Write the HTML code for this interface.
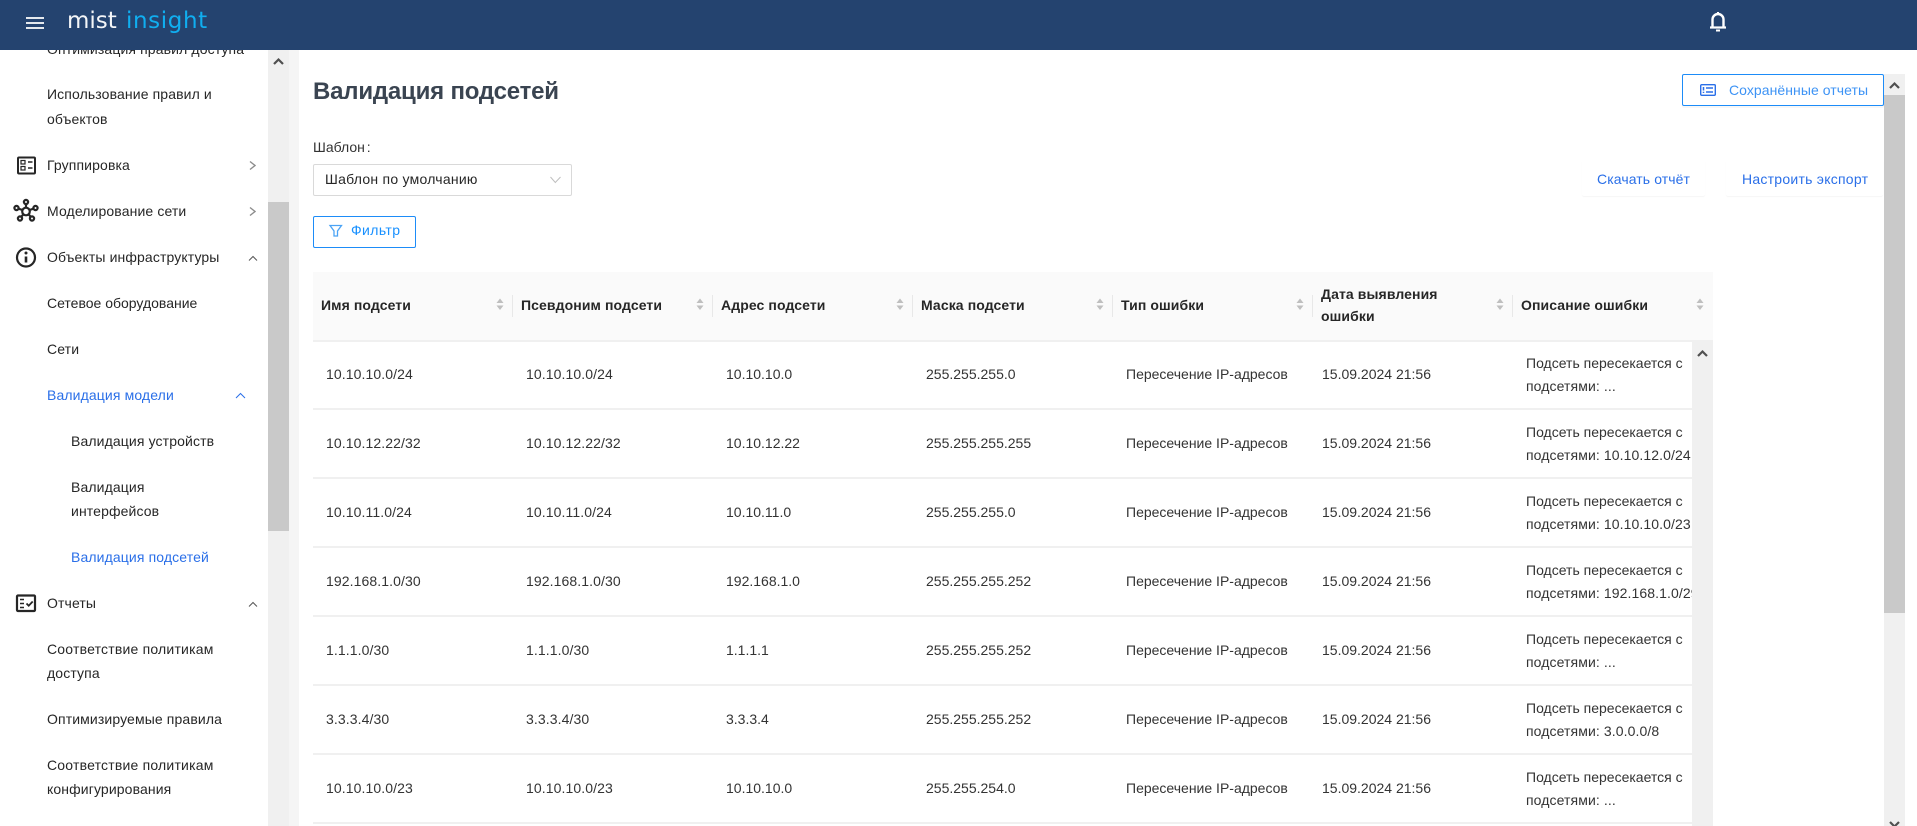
<!DOCTYPE html>
<html lang="ru"><head><meta charset="utf-8"><title>Валидация подсетей</title>
<style>
html,body{margin:0;padding:0;width:1917px;height:826px;overflow:hidden;background:#fff}
body{position:relative;font-family:"Liberation Sans",sans-serif;font-size:14px;color:#333}
.a{position:absolute}
.t{position:absolute;line-height:20px;white-space:nowrap}
.s{color:#262626;letter-spacing:.12px}
.b{color:#2a6fe8;letter-spacing:.12px}
.h{font-weight:700;color:#262626;letter-spacing:.1px}
.d{letter-spacing:.1px}
.line{position:absolute;left:313px;width:1379px;height:2px;background:#f0f0f0}
.sep{position:absolute;width:1px;height:22px;top:295px;background:#e8e8e8}
svg{position:absolute;overflow:visible}
</style></head><body>

<!-- sidebar -->
<div class="t s" style="left:47px;top:39px">Оптимизация правил доступа</div>
<div class="t s" style="left:47px;top:84px">Использование правил и</div>
<div class="t s" style="left:47px;top:109px">объектов</div>
<div class="t s" style="left:47px;top:155px">Группировка</div>
<div class="t s" style="left:47px;top:201px">Моделирование сети</div>
<div class="t s" style="left:47px;top:247px">Объекты инфраструктуры</div>
<div class="t s" style="left:47px;top:293px;letter-spacing:0">Сетевое оборудование</div>
<div class="t s" style="left:47px;top:339px">Сети</div>
<div class="t b" style="left:47px;top:385px">Валидация модели</div>
<div class="t s" style="left:71px;top:431px">Валидация устройств</div>
<div class="t s" style="left:71px;top:477px">Валидация</div>
<div class="t s" style="left:71px;top:501px">интерфейсов</div>
<div class="t b" style="left:71px;top:547px">Валидация подсетей</div>
<div class="t s" style="left:47px;top:593px">Отчеты</div>
<div class="t s" style="left:47px;top:639px;letter-spacing:.2px">Соответствие политикам</div>
<div class="t s" style="left:47px;top:663px">доступа</div>
<div class="t s" style="left:47px;top:709px">Оптимизируемые правила</div>
<div class="t s" style="left:47px;top:755px;letter-spacing:.2px">Соответствие политикам</div>
<div class="t s" style="left:47px;top:779px">конфигурирования</div>

<svg style="left:0;top:0" width="290" height="826" fill="none">
  <!-- group icon -->
  <rect x="18" y="157.5" width="17" height="16" rx="1" stroke="#262626" stroke-width="2"/>
  <rect x="21" y="160.5" width="4" height="3.5" stroke="#262626" stroke-width="1.2"/>
  <rect x="21" y="166.5" width="4" height="3.5" stroke="#262626" stroke-width="1.2"/>
  <path d="M28 162h4.5M28 168h4.5" stroke="#262626" stroke-width="1.6"/>
  <!-- network icon -->
  <g stroke="#262626" stroke-width="2.2">
    <circle cx="26" cy="211.500" r="3.800"/>
    <circle cx="26" cy="202" r="2.100"/><circle cx="16.500" cy="208" r="2.100"/><circle cx="35.500" cy="208" r="2.100"/>
    <circle cx="20" cy="218.500" r="2.100"/><circle cx="32" cy="218.500" r="2.100"/>
    <path d="M26 204v3.500M18.500 208.700l4 1.300M33.500 208.700l-4 1.300M21.300 216.800l2.300-2.800M30.700 216.800l-2.300-2.800"/>
  </g>
  <!-- info icon -->
  <circle cx="26" cy="257.5" r="9" stroke="#262626" stroke-width="2.200"/>
  <path d="M26 256.5v6" stroke="#262626" stroke-width="2.600"/>
  <circle cx="26" cy="253" r="1.500" fill="#262626"/>
  <!-- report icon -->
  <rect x="17" y="595.5" width="18" height="15.5" rx="1" stroke="#262626" stroke-width="2.200"/>
  <path d="M20 599.500h4M20 603.500h4M20 607.500h4" stroke="#262626" stroke-width="1.600"/>
  <path d="M26.500 603.500l2.200 2.200 4-4.200" stroke="#262626" stroke-width="1.800"/>
  <!-- chevrons -->
  <path d="M250 161.500l5 4-5 4M250 207.500l5 4-5 4" stroke="#8c8c8c" stroke-width="1.400"/>
  <path d="M249 260.500l4-4 4 4M249 606.500l4-4 4 4" stroke="#555" stroke-width="1"/>
  <path d="M236 398l4.500-4.500 4.500 4.500" stroke="#2a6fe8" stroke-width="1"/>
</svg>
<div class="a" style="left:268px;top:50px;width:21px;height:776px;background:#f0f0f0"></div>
<div class="a" style="left:268px;top:202px;width:21px;height:329px;background:#c9c9c9"></div>
<div class="a" style="left:289px;top:50px;width:10px;height:776px;background:#f5f5f5"></div>
<svg style="left:268px;top:50px" width="21" height="21"><path d="M6 14l4.500-4.500 4.500 4.500" fill="none" stroke="#505050" stroke-width="2.200"/></svg>

<!-- header -->
<div class="a" style="left:0;top:0;width:1917px;height:50px;background:#24436f"></div>
<svg style="left:26px;top:17px" width="18" height="12"><path d="M0 1h18M0 6h18M0 11h18" stroke="#fff" stroke-width="1.800"/></svg>
<div class="t" style="left:67px;top:7px;font-family:'DejaVu Sans',sans-serif;font-size:23px;line-height:28px;color:#f4f6f8">mist</div>
<div class="t" style="left:126px;top:7px;font-family:'DejaVu Sans',sans-serif;font-size:23px;line-height:28px;color:#10aef0;letter-spacing:.6px">insight</div>
<svg style="left:1709px;top:11px" width="18" height="21" fill="none">
  <path d="M3.500 15.500V8.500a5.500 5.500 0 0 1 11 0v7" stroke="#fff" stroke-width="2.400"/>
  <path d="M1 16.500h16" stroke="#fff" stroke-width="2.200"/>
  <path d="M9 1v2M7 19.500h4" stroke="#fff" stroke-width="2"/>
</svg>

<!-- page top -->
<div class="t" style="left:313px;top:77px;font-size:24px;line-height:30px;font-weight:700;color:#3a4451;letter-spacing:-.2px">Валидация подсетей</div>
<div class="t" style="left:313px;top:137px;color:#333;word-spacing:-2px">Шаблон :</div>
<div class="a" style="left:313px;top:164px;width:257px;height:30px;border:1px solid #d9d9d9;border-radius:2px"></div>
<div class="t" style="left:325px;top:169px;color:#262626;letter-spacing:.25px">Шаблон по умолчанию</div>
<svg style="left:550px;top:176px" width="11" height="8"><path d="M.5 1l4.800 5.500L10.500 1" fill="none" stroke="#bfbfbf" stroke-width="1"/></svg>
<div class="a" style="left:313px;top:216px;width:101px;height:30px;border:1px solid #1d8cf8;border-radius:2px"></div>
<svg style="left:329px;top:224px" width="14" height="14" fill="none"><path d="M1 1.500h11.500L8.500 7v5h-3.500V7z" stroke="#4ba3f5" stroke-width="1.300"/></svg>
<div class="t" style="left:351px;top:220px;color:#1890ff;letter-spacing:.4px">Фильтр</div>

<div class="a" style="left:1682px;top:74px;width:200px;height:30px;border:1px solid #1d8cf8;border-radius:2px;background:#fff;box-shadow:0 2px 0 rgba(0,0,0,.03)"></div>
<svg style="left:1700px;top:84px" width="16" height="12" fill="none"><rect x=".7" y=".7" width="14.600" height="10.600" rx="1" stroke="#2a6fe8" stroke-width="1.400"/><path d="M3.500 3v3.500M3.500 7.800v1.200M6 4h7M6 8h7" stroke="#2a6fe8" stroke-width="1.500"/></svg>
<div class="t" style="left:1729px;top:80px;color:#3d93f5;letter-spacing:.06px">Сохранённые отчеты</div>

<div class="a" style="left:1582px;top:160px;width:123px;height:36px;box-shadow:0 1px 1px rgba(0,0,0,.04);border-radius:2px"></div>
<div class="a" style="left:1726px;top:160px;width:157px;height:36px;box-shadow:0 1px 1px rgba(0,0,0,.04);border-radius:2px"></div>
<div class="t" style="left:1597px;top:169px;color:#2a6fe8;letter-spacing:.1px">Скачать отчёт</div>
<div class="t" style="left:1742px;top:169px;color:#2a6fe8;letter-spacing:.25px">Настроить экспорт</div>

<!-- main scrollbar -->
<div class="a" style="left:1884px;top:74px;width:21px;height:752px;background:#f0f0f0"></div>
<div class="a" style="left:1884px;top:95px;width:21px;height:518px;background:#c9c9c9"></div>
<svg style="left:1884px;top:74px" width="21" height="21"><path d="M6 14l4.500-4.500 4.500 4.500" fill="none" stroke="#505050" stroke-width="2.200"/></svg>
<svg style="left:1884px;top:815px" width="21" height="11"><path d="M6 7l4.500 4.500 4.500-4.500" fill="none" stroke="#505050" stroke-width="2.200"/></svg>

<!-- table header -->
<div class="a" style="left:313px;top:272px;width:1400px;height:68px;background:#fafafa"></div>
<div class="a" style="left:313px;top:340px;width:1400px;height:2px;background:#f0f0f0"></div>
<div class="sep" style="left:512px"></div><div class="sep" style="left:712px"></div><div class="sep" style="left:912px"></div><div class="sep" style="left:1112px"></div><div class="sep" style="left:1312px"></div><div class="sep" style="left:1512px"></div>
<div class="t h" style="left:321px;top:295px">Имя подсети</div>
<div class="t h" style="left:521px;top:295px">Псевдоним подсети</div>
<div class="t h" style="left:721px;top:295px">Адрес подсети</div>
<div class="t h" style="left:921px;top:295px">Маска подсети</div>
<div class="t h" style="left:1121px;top:295px">Тип ошибки</div>
<div class="t h" style="left:1321px;top:284px">Дата выявления</div>
<div class="t h" style="left:1321px;top:306px">ошибки</div>
<div class="t h" style="left:1521px;top:295px">Описание ошибки</div>
<svg style="left:1px;top:0" width="1917" height="340" fill="#bfbfbf">
  <path d="M495.500 303h7l-3.500-4.500zM495.500 305.500h7L499 310z"/>
  <path d="M695.500 303h7l-3.500-4.500zM695.500 305.500h7L699 310z"/>
  <path d="M895.500 303h7l-3.500-4.500zM895.500 305.500h7L899 310z"/>
  <path d="M1095.500 303h7l-3.500-4.500zM1095.500 305.500h7L1099 310z"/>
  <path d="M1295.500 303h7l-3.500-4.500zM1295.500 305.500h7L1299 310z"/>
  <path d="M1495.500 303h7l-3.500-4.500zM1495.500 305.500h7L1499 310z"/>
  <path d="M1695.500 303h7l-3.500-4.500zM1695.500 305.500h7L1699 310z"/>
</svg>

<!-- table rows -->
<div class="line" style="top:408px"></div><div class="line" style="top:477px"></div><div class="line" style="top:546px"></div><div class="line" style="top:615px"></div><div class="line" style="top:684px"></div><div class="line" style="top:753px"></div><div class="line" style="top:822px"></div>

<div class="t d" style="left:326px;top:364px">10.10.10.0/24</div><div class="t d" style="left:526px;top:364px">10.10.10.0/24</div><div class="t" style="left:726px;top:364px">10.10.10.0</div><div class="t" style="left:926px;top:364px">255.255.255.0</div><div class="t" style="left:1126px;top:364px">Пересечение IP-адресов</div><div class="t" style="left:1322px;top:364px">15.09.2024 21:56</div>
<div class="t d" style="left:326px;top:433px">10.10.12.22/32</div><div class="t d" style="left:526px;top:433px">10.10.12.22/32</div><div class="t" style="left:726px;top:433px">10.10.12.22</div><div class="t" style="left:926px;top:433px">255.255.255.255</div><div class="t" style="left:1126px;top:433px">Пересечение IP-адресов</div><div class="t" style="left:1322px;top:433px">15.09.2024 21:56</div>
<div class="t d" style="left:326px;top:502px">10.10.11.0/24</div><div class="t d" style="left:526px;top:502px">10.10.11.0/24</div><div class="t" style="left:726px;top:502px">10.10.11.0</div><div class="t" style="left:926px;top:502px">255.255.255.0</div><div class="t" style="left:1126px;top:502px">Пересечение IP-адресов</div><div class="t" style="left:1322px;top:502px">15.09.2024 21:56</div>
<div class="t d" style="left:326px;top:571px">192.168.1.0/30</div><div class="t d" style="left:526px;top:571px">192.168.1.0/30</div><div class="t" style="left:726px;top:571px">192.168.1.0</div><div class="t" style="left:926px;top:571px">255.255.255.252</div><div class="t" style="left:1126px;top:571px">Пересечение IP-адресов</div><div class="t" style="left:1322px;top:571px">15.09.2024 21:56</div>
<div class="t d" style="left:326px;top:640px">1.1.1.0/30</div><div class="t d" style="left:526px;top:640px">1.1.1.0/30</div><div class="t" style="left:726px;top:640px">1.1.1.1</div><div class="t" style="left:926px;top:640px">255.255.255.252</div><div class="t" style="left:1126px;top:640px">Пересечение IP-адресов</div><div class="t" style="left:1322px;top:640px">15.09.2024 21:56</div>
<div class="t d" style="left:326px;top:709px">3.3.3.4/30</div><div class="t d" style="left:526px;top:709px">3.3.3.4/30</div><div class="t" style="left:726px;top:709px">3.3.3.4</div><div class="t" style="left:926px;top:709px">255.255.255.252</div><div class="t" style="left:1126px;top:709px">Пересечение IP-адресов</div><div class="t" style="left:1322px;top:709px">15.09.2024 21:56</div>
<div class="t d" style="left:326px;top:778px">10.10.10.0/23</div><div class="t d" style="left:526px;top:778px">10.10.10.0/23</div><div class="t" style="left:726px;top:778px">10.10.10.0</div><div class="t" style="left:926px;top:778px">255.255.254.0</div><div class="t" style="left:1126px;top:778px">Пересечение IP-адресов</div><div class="t" style="left:1322px;top:778px">15.09.2024 21:56</div>

<div class="t" style="left:1526px;top:353px">Подсеть пересекается с</div><div class="t d" style="left:1526px;top:376px">подсетями: ...</div>
<div class="t" style="left:1526px;top:422px">Подсеть пересекается с</div><div class="t d" style="left:1526px;top:445px">подсетями: 10.10.12.0/24</div>
<div class="t" style="left:1526px;top:491px">Подсеть пересекается с</div><div class="t d" style="left:1526px;top:514px">подсетями: 10.10.10.0/23</div>
<div class="t" style="left:1526px;top:560px">Подсеть пересекается с</div><div class="t d" style="left:1526px;top:583px">подсетями: 192.168.1.0/29</div>
<div class="t" style="left:1526px;top:629px">Подсеть пересекается с</div><div class="t d" style="left:1526px;top:652px">подсетями: ...</div>
<div class="t" style="left:1526px;top:698px">Подсеть пересекается с</div><div class="t d" style="left:1526px;top:721px">подсетями: 3.0.0.0/8</div>
<div class="t" style="left:1526px;top:767px">Подсеть пересекается с</div><div class="t d" style="left:1526px;top:790px">подсетями: ...</div>

<!-- table scrollbar -->
<div class="a" style="left:1692px;top:342px;width:21px;height:484px;background:#f0f0f0"></div>
<div class="a" style="left:1713px;top:342px;width:171px;height:484px;background:#fff"></div>
<svg style="left:1692px;top:342px" width="21" height="21"><path d="M6 14l4.500-4.500 4.500 4.500" fill="none" stroke="#505050" stroke-width="2.200"/></svg>
</body></html>
